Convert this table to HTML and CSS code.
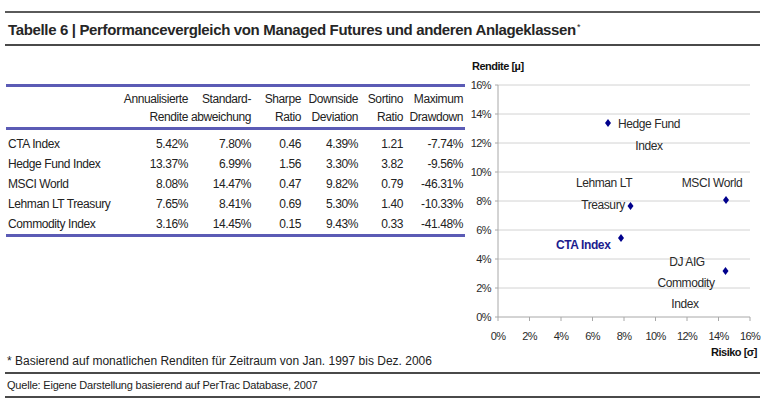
FILE: index.html
```html
<!DOCTYPE html>
<html lang="de">
<head>
<meta charset="utf-8">
<title>Tabelle 6</title>
<link rel="stylesheet" href="styles.css">
</head>
<body>
<div class="page">
  <h1 class="title">Tabelle 6 | Performancevergleich von Managed Futures und anderen Anlageklassen<sup>*</sup></h1>
  <div class="main">
    <div class="left">
      <table class="perf">
        <colgroup>
          <col class="c-name"><col class="c-ren"><col class="c-std"><col class="c-shp"><col class="c-dd"><col class="c-sor"><col class="c-max">
        </colgroup>
        <thead>
          <tr class="h1"><th></th><th>Annualisierte</th><th>Standard-</th><th>Sharpe</th><th>Downside</th><th>Sortino</th><th>Maximum</th></tr>
          <tr class="h2"><th></th><th>Rendite</th><th>abweichung</th><th>Ratio</th><th>Deviation</th><th>Ratio</th><th>Drawdown</th></tr>
        </thead>
        <tbody>
          <tr class="first"><td>CTA Index</td><td>5.42%</td><td>7.80%</td><td>0.46</td><td>4.39%</td><td>1.21</td><td>-7.74%</td></tr>
          <tr><td>Hedge Fund Index</td><td>13.37%</td><td>6.99%</td><td>1.56</td><td>3.30%</td><td>3.82</td><td>-9.56%</td></tr>
          <tr><td>MSCI World</td><td>8.08%</td><td>14.47%</td><td>0.47</td><td>9.82%</td><td>0.79</td><td>-46.31%</td></tr>
          <tr><td>Lehman LT Treasury</td><td>7.65%</td><td>8.41%</td><td>0.69</td><td>5.30%</td><td>1.40</td><td>-10.33%</td></tr>
          <tr class="last"><td>Commodity Index</td><td>3.16%</td><td>14.45%</td><td>0.15</td><td>9.43%</td><td>0.33</td><td>-41.48%</td></tr>
        </tbody>
      </table>
    </div>
    <svg class="chart" width="295" height="310" viewBox="0 0 295 310">
      <g class="grid">
        <line x1="33" y1="38" x2="285" y2="38"/>
        <line x1="33" y1="67" x2="285" y2="67"/>
        <line x1="33" y1="96" x2="285" y2="96"/>
        <line x1="33" y1="125" x2="285" y2="125"/>
        <line x1="33" y1="154" x2="285" y2="154"/>
        <line x1="33" y1="183" x2="285" y2="183"/>
        <line x1="33" y1="212" x2="285" y2="212"/>
        <line x1="33" y1="241" x2="285" y2="241"/>
      </g>
      <g class="axis">
        <line x1="33" y1="38" x2="33" y2="270"/>
        <line x1="30" y1="270" x2="285" y2="270"/>
        <line x1="30" y1="38" x2="33" y2="38"/>
        <line x1="30" y1="67" x2="33" y2="67"/>
        <line x1="30" y1="96" x2="33" y2="96"/>
        <line x1="30" y1="125" x2="33" y2="125"/>
        <line x1="30" y1="154" x2="33" y2="154"/>
        <line x1="30" y1="183" x2="33" y2="183"/>
        <line x1="30" y1="212" x2="33" y2="212"/>
        <line x1="30" y1="241" x2="33" y2="241"/>
        <line x1="33" y1="270" x2="33" y2="274"/>
        <line x1="64.5" y1="270" x2="64.5" y2="274"/>
        <line x1="96" y1="270" x2="96" y2="274"/>
        <line x1="127.5" y1="270" x2="127.5" y2="274"/>
        <line x1="159" y1="270" x2="159" y2="274"/>
        <line x1="190.5" y1="270" x2="190.5" y2="274"/>
        <line x1="222" y1="270" x2="222" y2="274"/>
        <line x1="253.5" y1="270" x2="253.5" y2="274"/>
        <line x1="285" y1="270" x2="285" y2="274"/>
      </g>
      <g class="ylab">
        <text x="26" y="42">16%</text>
        <text x="26" y="71">14%</text>
        <text x="26" y="100">12%</text>
        <text x="26" y="129">10%</text>
        <text x="26" y="158">8%</text>
        <text x="26" y="187">6%</text>
        <text x="26" y="216">4%</text>
        <text x="26" y="245">2%</text>
        <text x="26" y="274">0%</text>
      </g>
      <g class="xlab">
        <text x="33" y="293">0%</text>
        <text x="64.5" y="293">2%</text>
        <text x="96" y="293">4%</text>
        <text x="127.5" y="293">6%</text>
        <text x="159" y="293">8%</text>
        <text x="190.5" y="293">10%</text>
        <text x="222" y="293">12%</text>
        <text x="253.5" y="293">14%</text>
        <text x="285" y="293">16%</text>
      </g>
      <text class="axtitle" x="7" y="23">Rendite [µ]</text>
      <text class="axtitle end" x="292" y="309">Risiko [σ]</text>
      <g class="pts">
        <polygon points="143,72 146,76 143,80 140,76"/>
        <polygon points="165.5,155 168.5,159 165.5,163 162.5,159"/>
        <polygon points="261,149 264,153 261,157 258,153"/>
        <polygon points="156,187 159,191 156,195 153,191"/>
        <polygon points="260.5,220 263.5,224 260.5,228 257.5,224"/>
      </g>
      <g class="plab">
        <text x="153" y="81">Hedge Fund</text>
        <text class="mid" x="184" y="103">Index</text>
        <text class="mid" x="139" y="140">Lehman LT</text>
        <text class="mid" x="138" y="162">Treasury</text>
        <text class="mid" x="247" y="140">MSCI World</text>
        <text class="cta" x="91" y="202">CTA Index</text>
        <text class="mid" x="222" y="219">DJ AIG</text>
        <text class="mid" x="221" y="240">Commodity</text>
        <text class="mid" x="220" y="261">Index</text>
      </g>
    </svg>
  </div>
  <p class="note">* Basierend auf monatlichen Renditen für Zeitraum von Jan. 1997 bis Dez. 2006</p>
  <p class="source">Quelle: Eigene Darstellung basierend auf PerTrac Database, 2007</p>
</div>
</body>
</html>
```

FILE: styles.css
```css
html, body {
  margin: 0;
  padding: 0;
  background: #ffffff;
}

body {
  font-family: "Liberation Sans", Arial, sans-serif;
  color: #222222;
  width: 770px;
  height: 412px;
  overflow: hidden;
}

.page {
  margin: 11px 0 0 5px;
  width: 755px;
}

.title {
  margin: 0;
  border-top: 2px solid #5a5a5a;
  border-bottom: 2px solid #4a4a4a;
  height: 35px;
  line-height: 33px;
  padding-left: 3px;
  font-size: 15px;
  font-weight: bold;
  letter-spacing: -0.35px;
  color: #262626;
  box-sizing: border-box;
}

.title sup {
  font-size: 9px;
  font-weight: normal;
  vertical-align: 5px;
  line-height: 0;
  margin-left: 1px;
}

.main {
  display: flex;
  height: 307px;
}

.left {
  width: 460px;
  padding-top: 38px;
  box-sizing: border-box;
}

.perf {
  margin-left: 1px;
  width: 459px;
  table-layout: fixed;
  border-collapse: collapse;
  font-size: 12px;
  letter-spacing: -0.4px;
  color: #222222;
}

.c-name { width: 114px; }
.c-ren { width: 68px; }
.c-std { width: 63px; }
.c-shp { width: 50px; }
.c-dd { width: 57px; }
.c-sor { width: 45px; }
.c-max { width: 62px; }

.perf th {
  font-weight: normal;
  text-align: right;
  padding: 0;
  height: 18px;
  line-height: 18px;
  white-space: nowrap;
}

.perf thead {
  border-top: 3px solid #5b5bb5;
  border-bottom: 3px solid #5b5bb5;
}

.perf tr.h1 th { padding-top: 3px; }
.perf tr.h2 th { padding-bottom: 1px; }

.perf td {
  padding: 0;
  height: 20px;
  line-height: 20px;
  text-align: right;
  white-space: nowrap;
}

.perf td:first-child {
  text-align: left;
  padding-left: 2px;
}

.perf td:last-child,
.perf th:last-child {
  padding-right: 2px;
}

.perf tr.first td { padding-top: 4px; }

.perf tbody {
  border-bottom: 3px solid #5b5bb5;
}

.chart {
  display: block;
  flex: none;
  margin-top: 1px;
  overflow: visible;
}

.chart text {
  font-family: "Liberation Sans", Arial, sans-serif;
  fill: #2a2a2a;
}

.grid line {
  stroke: #d2d2d2;
  stroke-width: 1;
}

.axis line {
  stroke: #a8a8a8;
  stroke-width: 1;
}

.ylab text {
  font-size: 11px;
  letter-spacing: -0.6px;
  text-anchor: end;
}

.xlab text {
  font-size: 11px;
  letter-spacing: -0.6px;
  text-anchor: middle;
}

.chart .axtitle {
  font-size: 11px;
  font-weight: bold;
  letter-spacing: -0.5px;
  fill: #111111;
}

.chart .axtitle.end {
  text-anchor: end;
}

.pts polygon {
  fill: #00008c;
}

.plab text {
  font-size: 12px;
  letter-spacing: -0.4px;
}

.plab text.mid {
  text-anchor: middle;
}

.chart .plab text.cta {
  font-weight: bold;
  fill: #1c1c8e;
}

.note {
  margin: 0;
  font-size: 12px;
  letter-spacing: 0;
  line-height: 16px;
  padding: 0 0 3px 2px;
  border-bottom: 2px solid #4a4a4a;
}

.source {
  margin: 0;
  font-size: 11px;
  letter-spacing: -0.2px;
  line-height: 22px;
  padding-left: 2px;
  border-bottom: 2px solid #4a4a4a;
}
```
